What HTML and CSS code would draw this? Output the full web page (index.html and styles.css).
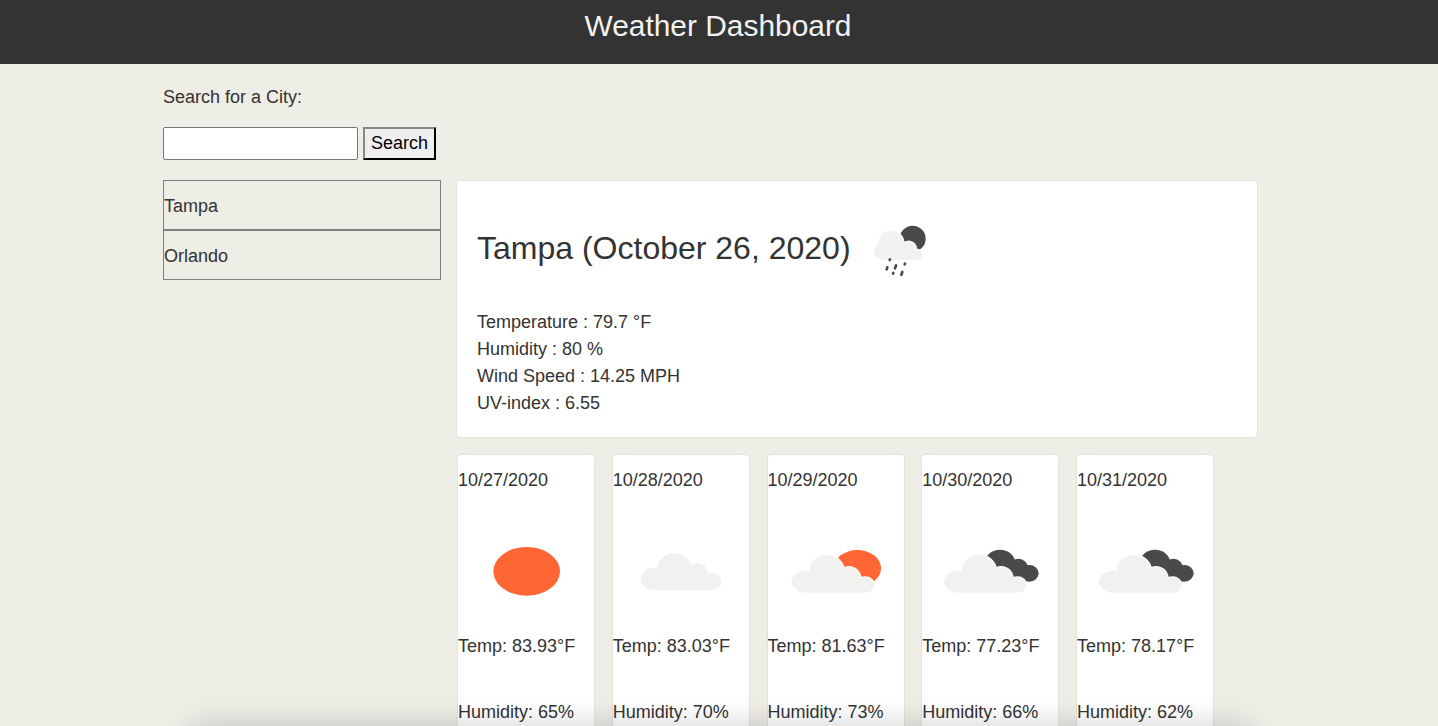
FILE: index.html
```html
<!DOCTYPE html>
<html lang="en">
<head>
<meta charset="utf-8">
<title>Weather Dashboard</title>
<link rel="stylesheet" href="styles.css">
</head>
<body>
<header class="top"><h1 class="top-title">Weather Dashboard</h1></header>
<div class="page">
  <label class="search-label" for="city">Search for a City:</label>
  <form class="search">
    <input class="search-input" id="city" type="text">
    <button class="search-btn" type="button">Search</button>
  </form>
  <div class="layout">
    <aside class="history">
      <div class="history-item">Tampa</div>
      <div class="history-item">Orlando</div>
    </aside>
    <main class="results">
      <section class="today">
        <div class="today-head">
          <h2 class="today-title">Tampa (October 26, 2020)</h2>
          <svg class="today-icon" viewBox="0 -18 240 198">
            <circle cx="158" cy="56" r="39" fill="#4a4a4d"/>
            <g fill="#fff" stroke="#fff" stroke-width="5"><ellipse cx="93" cy="70" rx="38" ry="38"/><ellipse cx="146" cy="88" rx="23" ry="24"/><ellipse cx="168" cy="104" rx="20" ry="16"/></g>
            <g fill="#f1f1ef"><ellipse cx="93" cy="70" rx="38" ry="38"/><ellipse cx="70" cy="95" rx="28" ry="25"/><ellipse cx="146" cy="88" rx="23" ry="24"/><ellipse cx="168" cy="104" rx="20" ry="16"/><rect x="70" y="90" width="98" height="30"/></g>
            <g stroke="#4a4a4d" stroke-width="8" stroke-linecap="round"><path d="M90 118l-1 2"/><path d="M82 142l-2 6"/><path d="M108 136l-3 9"/><path d="M135 131l-1 2"/><path d="M127 156l-3 8"/><path d="M100 159l-1 2"/></g>
          </svg>
        </div>
        <p class="today-line">Temperature : 79.7 °F</p>
        <p class="today-line">Humidity : 80 %</p>
        <p class="today-line">Wind Speed : 14.25 MPH</p>
        <p class="today-line">UV-index : 6.55</p>
      </section>
      <section class="forecast">
        <article class="day">
          <p class="day-date">10/27/2020</p>
          <svg class="day-icon" viewBox="-6 -27 408 300" preserveAspectRatio="none"><ellipse cx="200" cy="124" rx="100" ry="73" fill="#ff6633"/></svg>
          <p class="day-line">Temp: 83.93°F</p>
          <p class="day-line">Humidity: 65%</p>
        </article>
        <article class="day">
          <p class="day-date">10/28/2020</p>
          <svg class="day-icon" viewBox="459 -27 408 300" preserveAspectRatio="none"><g fill="#f1f1ef"><ellipse cx="580" cy="147" rx="38" ry="33"/><ellipse cx="643" cy="118" rx="51" ry="49"/><ellipse cx="712" cy="130" rx="32" ry="31"/><ellipse cx="750" cy="154" rx="35" ry="26"/><rect x="580" y="130" width="170" height="50"/></g></svg>
          <p class="day-line">Temp: 83.03°F</p>
          <p class="day-line">Humidity: 70%</p>
        </article>
        <article class="day">
          <p class="day-date">10/29/2020</p>
          <svg class="day-icon" viewBox="-6 -27 408 300" preserveAspectRatio="none">
            <ellipse cx="262" cy="115" rx="71" ry="55" fill="#ff6633"/>
            <g fill="#fff" stroke="#fff" stroke-width="6"><ellipse cx="170" cy="125" rx="52" ry="50"/><ellipse cx="236" cy="145" rx="35" ry="34"/><ellipse cx="285" cy="165" rx="27" ry="23"/></g>
            <g fill="#f1f1ef"><ellipse cx="110" cy="155" rx="45" ry="33"/><ellipse cx="170" cy="125" rx="52" ry="50"/><ellipse cx="236" cy="145" rx="35" ry="34"/><ellipse cx="285" cy="165" rx="27" ry="23"/><rect x="110" y="150" width="175" height="38"/></g>
          </svg>
          <p class="day-line">Temp: 81.63°F</p>
          <p class="day-line">Humidity: 73%</p>
        </article>
        <article class="day">
          <p class="day-date">10/30/2020</p>
          <svg class="day-icon" viewBox="456 -27 408 300" preserveAspectRatio="none">
            <g fill="#4a4a4d"><ellipse cx="690" cy="97" rx="45" ry="38"/><ellipse cx="745" cy="117" rx="30" ry="31"/><ellipse cx="778" cy="130" rx="28" ry="25"/><path d="M650 80L725 90L780 125L780 152L760 157L660 130z"/></g>
            <g fill="#fff" stroke="#fff" stroke-width="6"><ellipse cx="627" cy="125" rx="52" ry="50"/><ellipse cx="693" cy="145" rx="35" ry="34"/><ellipse cx="742" cy="165" rx="27" ry="23"/></g>
            <g fill="#f1f1ef"><ellipse cx="567" cy="155" rx="45" ry="33"/><ellipse cx="627" cy="125" rx="52" ry="50"/><ellipse cx="693" cy="145" rx="35" ry="34"/><ellipse cx="742" cy="165" rx="27" ry="23"/><rect x="567" y="150" width="175" height="38"/></g>
          </svg>
          <p class="day-line">Temp: 77.23°F</p>
          <p class="day-line">Humidity: 66%</p>
        </article>
        <article class="day">
          <p class="day-date">10/31/2020</p>
          <svg class="day-icon" viewBox="456 -27 408 300" preserveAspectRatio="none">
            <g fill="#4a4a4d"><ellipse cx="690" cy="97" rx="45" ry="38"/><ellipse cx="745" cy="117" rx="30" ry="31"/><ellipse cx="778" cy="130" rx="28" ry="25"/><path d="M650 80L725 90L780 125L780 152L760 157L660 130z"/></g>
            <g fill="#fff" stroke="#fff" stroke-width="6"><ellipse cx="627" cy="125" rx="52" ry="50"/><ellipse cx="693" cy="145" rx="35" ry="34"/><ellipse cx="742" cy="165" rx="27" ry="23"/></g>
            <g fill="#f1f1ef"><ellipse cx="567" cy="155" rx="45" ry="33"/><ellipse cx="627" cy="125" rx="52" ry="50"/><ellipse cx="693" cy="145" rx="35" ry="34"/><ellipse cx="742" cy="165" rx="27" ry="23"/><rect x="567" y="150" width="175" height="38"/></g>
          </svg>
          <p class="day-line">Temp: 78.17°F</p>
          <p class="day-line">Humidity: 62%</p>
        </article>
      </section>
    </main>
  </div>
</div>
<div class="bottom-shadow"></div>
</body>
</html>
```
FILE: styles.css
```css
html, body { height: 100%; }
body {
  margin: 0;
  height: 726px;
  overflow: hidden;
  position: relative;
  background: #eeede6;
  color: #333;
  font-family: "Liberation Sans", Arial, sans-serif;
  font-size: 18px;
  line-height: 27px;
}
.top { height: 64px; background: #333; display: flex; justify-content: center; padding-right: 2px; }
.top-title { margin: 8px 0 0; font-size: 29.9px; font-weight: 400; line-height: 35px; color: #f2f2f2; height: 35px; }
.page { padding: 20px 0 0 163px; }
.search-label { display: block; height: 27px; }
.search { display: flex; gap: 5px; margin-top: 16px; height: 33px; }
.search-input { width: 195px; height: 33px; box-sizing: border-box; border: 1px solid #767676; border-radius: 2px; background: #fff; padding: 0; margin: 0; }
.search-btn { width: 73px; height: 33px; box-sizing: border-box; border: 2px outset #333; background: #efefef; color: #000; font-family: "Liberation Sans", Arial, sans-serif; font-size: 18px; padding: 0; margin: 0; }
.layout { display: flex; gap: 15px; margin-top: 20px; }
.history { width: 278px; flex: none; }
.history-item { height: 50px; box-sizing: border-box; border: 1px solid #808080; display: flex; align-items: center; padding-top: 2px; }
.results { width: 802px; flex: none; }
.today { box-sizing: border-box; height: 258px; background: #fff; border: 1px solid #e3e2dc; border-radius: 4px; padding: 33px 20px 0; }
.today-head { display: flex; height: 66px; align-items: center; margin-bottom: 29px; }
.today-title { margin: 0; padding-top: 2px; font-size: 32px; font-weight: 400; line-height: 40px; }
.today-icon { width: 80px; height: 66px; margin-left: 9px; flex: none; }
.today-line { margin: 0; }
.forecast { display: flex; gap: 16.75px; margin: 16px 0 0 1px; }
.day { width: 138px; box-sizing: border-box; height: 330px; flex: none; background: #fff; border: 1px solid #e3e2dc; border-radius: 4px; padding-top: 12px; }
.day-date { margin: 0; }
.day-icon { display: block; width: 136px; height: 100px; margin: 27px 0 12px; }
.day-line { margin: 0 0 39px; }
.bottom-shadow { position: absolute; left: 195px; width: 1050px; top: 732px; height: 40px; box-shadow: 0 0 32px 4px rgba(0,0,0,.22); }
```
